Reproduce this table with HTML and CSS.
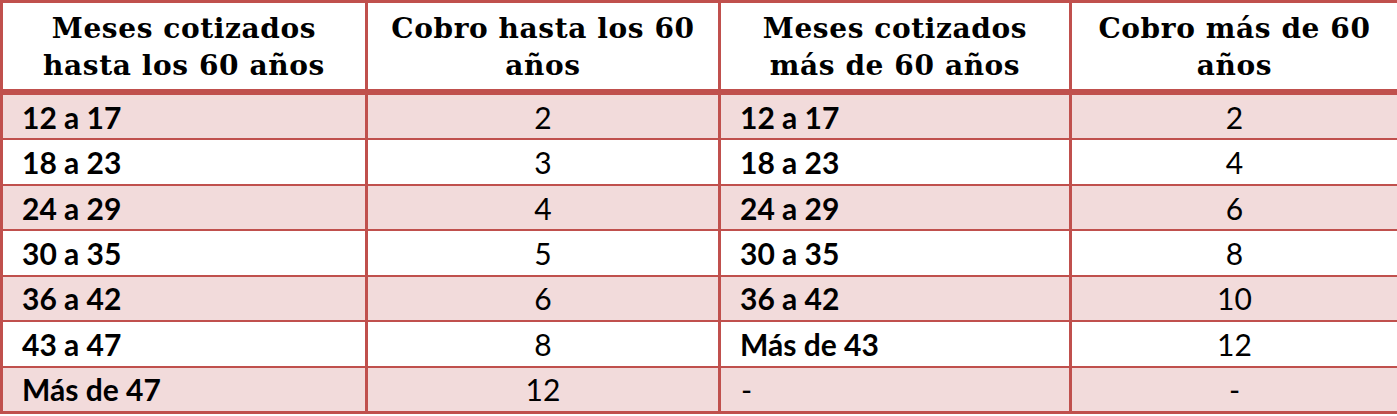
FILE: index.html
```html
<!DOCTYPE html>
<html lang="es">
<head>
<meta charset="utf-8">
<link rel="stylesheet" href="styles.css">
<title>Tabla</title>
</head>
<body>
<table class="tabla">
  <colgroup>
    <col class="c1"><col class="c2"><col class="c3"><col class="c4">
  </colgroup>
  <thead>
    <tr>
      <th>Meses cotizados<br>hasta los 60 años</th>
      <th>Cobro hasta los 60<br>años</th>
      <th>Meses cotizados<br>más de 60 años</th>
      <th>Cobro más de 60<br>años</th>
    </tr>
  </thead>
  <tbody>
    <tr class="odd"><td class="lbl">12 a 17</td><td class="num">2</td><td class="lbl">12 a 17</td><td class="num">2</td></tr>
    <tr><td class="lbl">18 a 23</td><td class="num">3</td><td class="lbl">18 a 23</td><td class="num">4</td></tr>
    <tr class="odd"><td class="lbl">24 a 29</td><td class="num">4</td><td class="lbl">24 a 29</td><td class="num">6</td></tr>
    <tr><td class="lbl">30 a 35</td><td class="num">5</td><td class="lbl">30 a 35</td><td class="num">8</td></tr>
    <tr class="odd"><td class="lbl">36 a 42</td><td class="num">6</td><td class="lbl">36 a 42</td><td class="num">10</td></tr>
    <tr><td class="lbl">43 a 47</td><td class="num">8</td><td class="lbl">Más de 43</td><td class="num">12</td></tr>
    <tr class="odd"><td class="lbl">Más de 47</td><td class="num">12</td><td class="dash">-</td><td class="num">-</td></tr>
  </tbody>
</table>
</body>
</html>
```
FILE: styles.css
```css
html, body {
  margin: 0;
  padding: 0;
  background: #ffffff;
}
.tabla {
  width: 1397px;
  height: 414px;
  border-collapse: collapse;
  table-layout: fixed;
  border: 3px solid #c0504d;
  color: #000;
}
.c1 { width: 365px; }
.c2 { width: 353px; }
.c3 { width: 351px; }
.c4 { width: 328px; }
.tabla th {
  font-family: "DejaVu Serif", "Liberation Serif", serif;
  font-weight: bold;
  font-size: 28px;
  line-height: 37px;
  text-align: center;
  height: 80px;
  padding: 4px 0 2px;
  border-left: 3px solid #c0504d;
  border-right: 3px solid #c0504d;
  border-bottom: 6px solid #c0504d;
  background: #fff;
  letter-spacing: 0.6px;
  white-space: nowrap;
}
.tabla td {
  font-family: Lato, "Liberation Sans", sans-serif;
  font-size: 30px;
  height: 43px;
  padding: 0;
  border-left: 3px solid #c0504d;
  border-right: 3px solid #c0504d;
  border-bottom: 2px solid #c0504d;
  vertical-align: middle;
}
.tabla tr.odd td { background: #f2dbdb; }
.lbl {
  font-weight: bold;
  padding-left: 19px !important;
  text-align: left;
}
.num {
  text-align: center;
  font-weight: normal;
}
.dash {
  padding-left: 20px !important;
  text-align: left;
}
```
